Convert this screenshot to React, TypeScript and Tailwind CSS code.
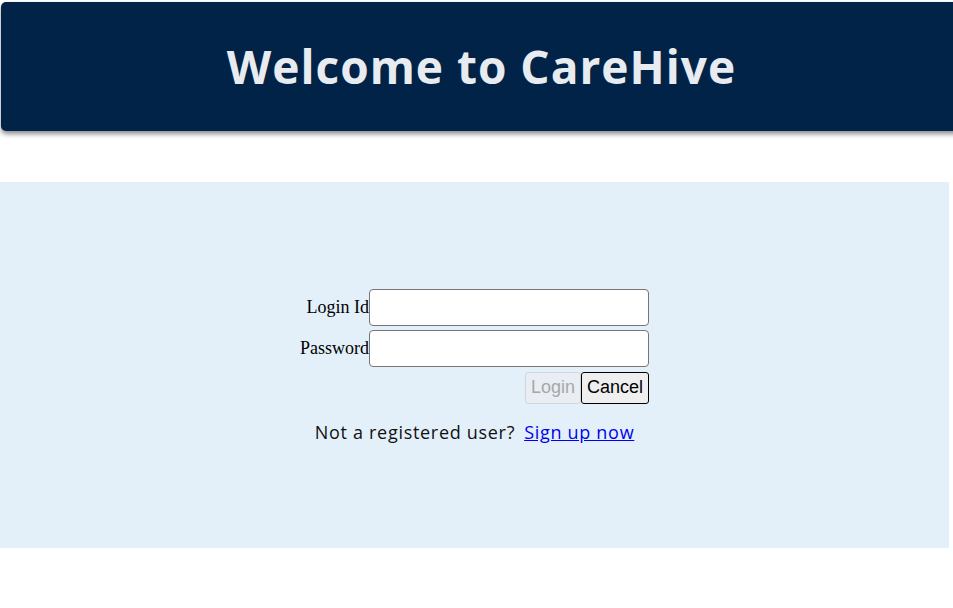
export default function App() {
  return (
    <div className="min-h-[608px] w-[953px] overflow-hidden bg-white pt-[2px]">
      <header className="ml-[1px] flex h-[129px] w-[961px] items-center justify-center rounded-[5px] bg-[#002347] shadow-[0_3px_5px_rgba(0,0,0,0.45)]">
        <h1 className="font-['Open_Sans',sans-serif] text-[46px] font-bold tracking-[1px] text-[#e8ecf0]">
          Welcome to CareHive
        </h1>
      </header>

      <div className="mt-[51px] flex h-[366px] w-[949px] flex-col items-center justify-center bg-[#e3f0fa] pt-[4px]">
        <form className="grid grid-cols-[auto_280px] items-center gap-y-[4px] font-['Liberation_Serif',serif] text-[18px] text-black">
          <label className="text-right">Login Id</label>
          <input className="h-[37px] rounded-[4px] border border-[#767676] bg-white" />
          <label className="text-right">Password</label>
          <input
            type="password"
            className="h-[37px] rounded-[4px] border border-[#767676] bg-white"
          />
          <div />
          <div className="mt-[1px] flex justify-end font-['Liberation_Sans',sans-serif] text-[18px]">
            <button
              type="button"
              disabled
              className="h-[32px] w-[56px] rounded-[3px] border border-[#cfd6dc] bg-[#e8eef3] text-[#a8a8a8]"
            >
              Login
            </button>
            <button
              type="button"
              className="h-[32px] w-[68px] rounded-[3px] border border-black bg-[#efefef] text-black"
            >
              Cancel
            </button>
          </div>
        </form>
        <p className="mt-[15px] font-['Open_Sans',sans-serif] text-[18px] tracking-[0.7px] text-[#111]">
          Not a registered user?
          <a href="#" className="ml-[9px] text-[#0000ee] underline">
            Sign up now
          </a>
        </p>
      </div>
    </div>
  )
}
